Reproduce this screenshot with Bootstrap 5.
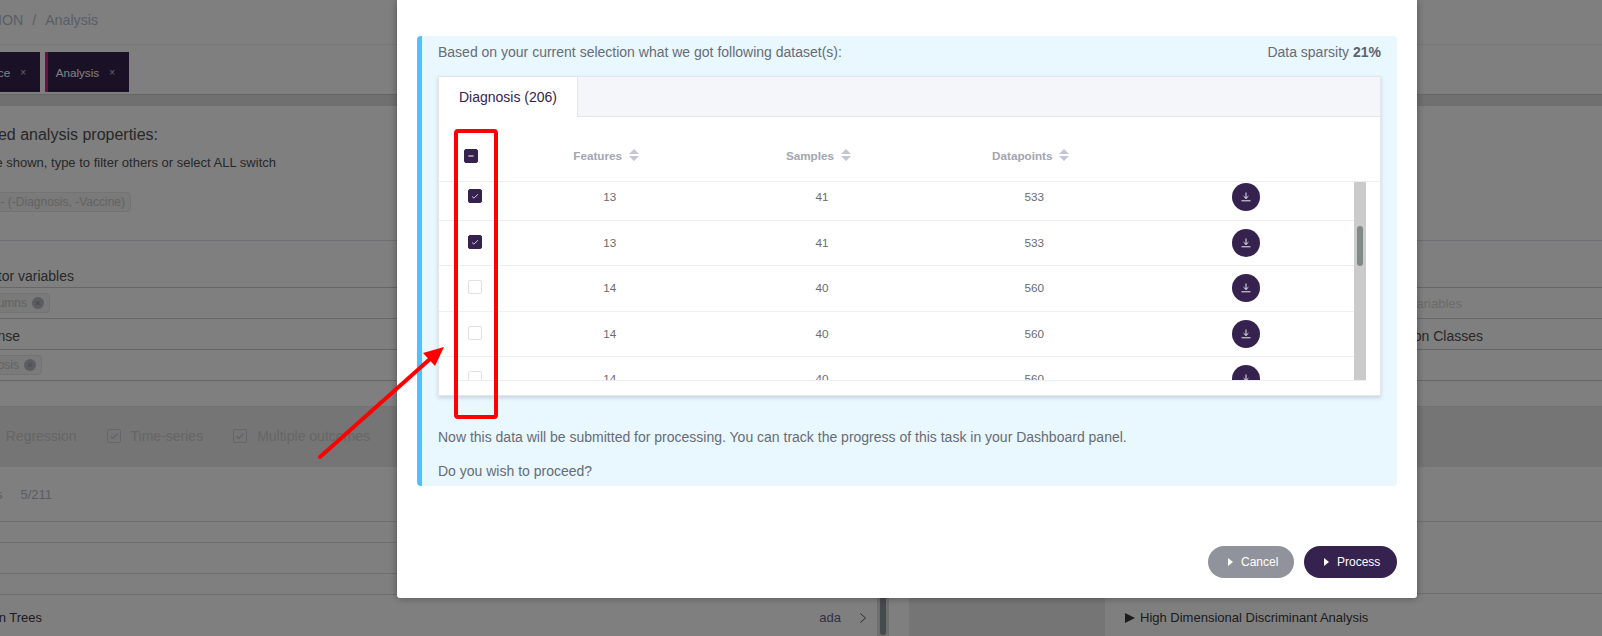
<!DOCTYPE html>
<html lang="en">
<head>
  <meta charset="UTF-8">
  <title>SIMON - Analysis</title>
  <link href="https://cdn.jsdelivr.net/npm/bootstrap@5.3.0/dist/css/bootstrap.min.css" rel="stylesheet">
  <style>
    html, body { height: 636px; overflow: hidden; }
    body { font-family: "Liberation Sans", Arial, sans-serif; font-size: 14px; color: #505050; background: #fff; }

    /* page behind the modal */
    .edge { display: flex; justify-content: flex-end; white-space: nowrap; flex: none; }
    .crumb-row { height: 45px; padding-bottom: 3px; border-bottom: 1px solid #eee; align-items: center; color: #b0bccb; }
    .crumb-row .edge { width: 98px; gap: 9px; font-size: 14.2px; }
    .tabs-row { height: 50px; padding-top: 7px; border-bottom: 1px solid #ccc; gap: 5px; }
    .app-tab { height: 40px; padding-top: 1px; background: #35224f; color: #fff; font-size: 11.7px; display: flex; align-items: center; justify-content: flex-end; white-space: nowrap; gap: 10px; padding-right: 14px; }
    .app-tab em { font-style: normal; font-size: 10px; color: #ccc; }
    .app-tab.first { width: 40px; flex: none; }
    .app-tab.last { width: 84px; flex: none; border-left: 3px solid #ee1489; padding-left: 7px; padding-right: 14px; }
    .gap-band { height: 11px; background: #e0e0e0; }
    .props-head { height: 135px; border-bottom: 1px solid #dcdce8; }
    .props-head .ttl { width: 158px; font-size: 16px; padding-top: 19px; line-height: 20px; }
    .props-head .sub { width: 276px; font-size: 13px; line-height: 20px; margin-top: 8px; }
    .props-head .chipwrap { width: 131px; margin-top: 19px; }
    .ghost-chip { height: 20px; border: 1px solid #e6e6e6; border-radius: 4px; color: #c6c6c6; font-size: 12px; display: flex; align-items: center; padding: 0 5px; background: #f4f4f4; gap: 5px; }
    .ghost-chip i { width: 12px; height: 12px; border-radius: 50%; background: #b6bac2; display: block; font-style: normal; font-size: 9px; line-height: 12px; text-align: center; color: #8a8e96; }
    .prop-row { display: flex; align-items: center; border-bottom: 1px solid #ccc; }
    .h-a { height: 47px; padding-top: 25px; }
    .h-b { height: 31px; }
    .h-c { height: 31px; padding-top: 5px; }
    .h-d { height: 31px; }
    .h-e { height: 25px; }
    .end-74 { width: 74px; }
    .end-50 { width: 50px; }
    .end-20 { width: 20px; }
    .end-42 { width: 42px; }
    .rt-faint { margin-left: auto; margin-right: 140px; margin-top: 2px; color: #d6d6d6; font-size: 13px; white-space: nowrap; }
    .rt-dark { margin-left: auto; margin-right: 119px; white-space: nowrap; }
    .opt-band { height: 61px; padding-bottom: 2px; background: #eaeaea; border-top: 1px solid #e2e2e2; align-items: center; }
    .opt-band .edge { width: 370px; align-items: center; color: #cccccc; }
    .opt-check { width: 14px; height: 14px; margin: 0 10px 0 30px; border: 1px solid #c8ccd4; border-radius: 2px; flex: none; display: flex; }
    .lower { height: 170px; }
    .lower-left { width: 889px; flex: none; }
    .lower-gap { width: 20px; flex: none; }
    .lower-mid { width: 196px; flex: none; background: #eaeaea; }
    .lr { border-bottom: 1px solid #ddd; display: flex; align-items: center; }
    .lr-a { height: 55px; padding-top: 2px; }
    .lr-b { height: 21px; }
    .lr-c { height: 31px; }
    .lr-d { height: 21px; }
    .lr-last { height: 42px; padding-top: 3px; display: flex; align-items: center; font-size: 13px; color: #3a3a3a; }
    .lr-a .edge { width: 52px; gap: 18px; font-size: 13px; color: #b4bac6; }
    .ada { margin-left: auto; color: #665f90; margin-right: 19px; }
    .chev { margin-right: 11px; }
    .side-track { width: 12px; flex: none; background: #dcdcdc; padding: 0 3px 2px; }
    .side-thumb { height: 100%; background: #8b9494; border-radius: 3px; }
    .r-a { height: 55px; border-bottom: 1px solid #ddd; }
    .r-b { height: 72px; border-bottom: 1px solid #ddd; }
    .r-last { height: 43px; padding: 5px 0 0 20px; display: flex; align-items: center; gap: 5px; font-size: 13px; color: #3a3a3a; white-space: nowrap; }
    .tri { width: 0; height: 0; border-left: 10px solid #383838; border-top: 5.5px solid transparent; border-bottom: 5.5px solid transparent; }

    /* modal */
    .modal.d-block { overflow: hidden; }
    .modal-dialog.dlg { max-width: 1020px; width: 1020px; margin: 0 0 0 397px; }
    .dlg .modal-content { height: 598px; border: 0; border-radius: 0 0 3px 3px; box-shadow: 0 0 8px rgba(0, 0, 0, .35); padding: 36px 20px 20px 20px; color: #676c75; }
    .info-box { height: 450px; margin: 0; padding: 6px 16px 0 16px; border: 0; border-left: 5px solid #4fc1ff; border-radius: 4px; background: #e9f7ff; color: #676c75; }
    .info-top { line-height: 20px; margin-bottom: 14px; }
    .info-top strong { color: #5c626c; }
    .note-a { margin: 31px 0 0; }
    .note-b { margin: 13px 0 0; }
    .set-card { height: 320px; border: 1px solid #e3e6ee; border-radius: 0; box-shadow: 0 2px 4px rgba(60, 70, 90, .2); background: #fff; }
    .set-card .nav-tabs { height: 40px; background: #f4f6fa; border-bottom: 1px solid #e3e6ee; }
    .set-card .nav-tabs .nav-link.active { height: 40px; width: 139px; padding: 0; display: flex; align-items: center; justify-content: center; color: #35224f; background: #fff; border: 0; border-right: 1px solid #e3e6ee; border-radius: 0; margin: 0; }
    .head-row { height: 65px; padding-top: 13px; border-bottom: 1px solid #eceef5; font-size: 11.7px; font-weight: 700; color: #a3a5b1; }
    .cell-first { width: 61px; padding-left: 25px; flex: none; }
    .cell-mid { width: 212.3px; flex: none; }
    .sort-ic { margin-left: 7px; flex: none; }
    .pane { height: 198px; padding-right: 14px; }
    .pane-rows { flex: 1 1 auto; overflow: hidden; }
    .pane-inner { margin-top: -7px; }
    .data-row { height: 45.5px; border-bottom: 1px solid #eceef5; font-size: 11.7px; color: #6b6b6f; }
    .data-row .cell-first { width: 64.5px; padding-left: 29px; }
    .data-row .tick { margin-bottom: 2px; }
    .track { width: 12px; flex: none; background: #cbcbcb; padding: 44px 3px 0; }
    .thumb { height: 40px; background: #808888; border-radius: 3px; }
    .tbl-foot { height: 15px; margin: 0 14px 0 19px; border-top: 1px solid #eceef5; }
    .form-check-input.tick { width: 14px; height: 14px; margin-top: 0; border-radius: 2px; border-color: #dfe1e7; }
    .form-check-input.tick:checked { background-color: #35224f; border-color: #35224f; background-image: url("data:image/svg+xml,%3csvg xmlns='http://www.w3.org/2000/svg' viewBox='0 0 14 14'%3e%3cpath fill='none' stroke='%23fff' stroke-width='.9' d='M3.5 7.5l2.2 2 4.8-4.5'/%3e%3c/svg%3e"); }
    .form-check-input.tick:indeterminate { background-color: #35224f; border-color: #35224f; background-image: url("data:image/svg+xml,%3csvg xmlns='http://www.w3.org/2000/svg' viewBox='0 0 14 14'%3e%3cpath fill='none' stroke='%23fff' stroke-width='1.3' d='M4 7h6'/%3e%3c/svg%3e"); }
    .dl-btn { width: 28px; height: 28px; padding: 0; margin-left: -2px; border: 0; border-radius: 50%; background: #35224f; display: flex; align-items: center; justify-content: center; }
    .act-btn { height: 32px; border: 0; font-size: 12px; color: #fff; display: flex; align-items: center; gap: 8px; padding: 0 14px 0 20px; }
    .act-btn::before { content: ""; border-left: 5px solid #fff; border-top: 4px solid transparent; border-bottom: 4px solid transparent; }
    .act-cancel { width: 86px; background: #90939b; }
    .act-go { width: 93px; background: #35224f; }
    .act-btn:hover { color: #fff; }
    .act-cancel:hover { background: #90939b; }
    .act-go:hover { background: #35224f; }
    .act-row { margin-top: 60px; gap: 10px; }
    .marks { position: absolute; top: 0; left: 0; z-index: 1060; pointer-events: none; }
  </style>
</head>
<body>
  <div id="pagina">
    <div class="crumb-row d-flex">
      <div class="edge"><span>SIMON</span><span>/</span><span>Analysis</span></div>
    </div>
    <div class="tabs-row d-flex">
      <div class="app-tab first"><span>Performance</span><em>&times;</em></div>
      <div class="app-tab last"><span>Analysis</span><em>&times;</em></div>
    </div>
    <div class="gap-band"></div>

    <div class="props-head">
      <div class="edge ttl">Selected analysis properties:</div>
      <div class="edge sub">Only first few are shown, type to filter others or select ALL switch</div>
      <div class="edge chipwrap"><span class="ghost-chip">Study - (-Diagnosis, -Vaccine)</span></div>
    </div>
    <div class="prop-row h-a"><div class="edge end-74">Predictor variables</div></div>
    <div class="prop-row h-b">
      <div class="edge end-50"><span class="ghost-chip">All columns <i>&times;</i></span></div>
      <div class="rt-faint">Predictor variables</div>
    </div>
    <div class="prop-row h-c">
      <div class="edge end-20">Response</div>
      <div class="rt-dark">Classification Classes</div>
    </div>
    <div class="prop-row h-d"><div class="edge end-42"><span class="ghost-chip">Diagnosis <i>&times;</i></span></div></div>
    <div class="h-e"></div>

    <div class="opt-band d-flex">
      <div class="edge">
        <span>Regression</span>
        <span class="opt-check"><svg width="12" height="12" viewBox="0 0 12 12"><path d="M2.5 6.2l2.4 2.3 4.6-5" fill="none" stroke="#c2c6ce" stroke-width="1.2"/></svg></span>
        <span>Time-series</span>
        <span class="opt-check"><svg width="12" height="12" viewBox="0 0 12 12"><path d="M2.5 6.2l2.4 2.3 4.6-5" fill="none" stroke="#c2c6ce" stroke-width="1.2"/></svg></span>
        <span>Multiple outcomes</span>
      </div>
    </div>

    <div class="lower d-flex">
      <div class="lower-left d-flex">
        <div class="flex-grow-1">
          <div class="lr lr-a"><div class="edge"><span>Models</span><span>5/211</span></div></div>
          <div class="lr lr-b"></div>
          <div class="lr lr-c"></div>
          <div class="lr lr-d"></div>
          <div class="lr-last">
            <div class="edge end-42">Boosted Classification Trees</div>
            <span class="ada">ada</span>
            <svg class="chev" width="6" height="10" viewBox="0 0 6 10"><path d="M.5.5L5.5 5 .5 9.5" fill="none" stroke="#555"/></svg>
          </div>
        </div>
        <div class="side-track"><div class="side-thumb"></div></div>
      </div>
      <div class="lower-gap"></div>
      <div class="lower-mid"></div>
      <div class="flex-grow-1">
        <div class="r-a"></div>
        <div class="r-b"></div>
        <div class="r-last"><span class="tri"></span><span>High Dimensional Discriminant Analysis</span></div>
      </div>
    </div>
  </div>

  <div class="modal-backdrop fade show"></div>

  <div class="modal d-block" tabindex="-1">
    <div class="modal-dialog dlg">
      <div class="modal-content">
        <div class="alert info-box">
          <div class="info-top d-flex justify-content-between">
            <span>Based on your current selection what we got following dataset(s):</span>
            <span>Data sparsity <strong>21%</strong></span>
          </div>

          <div class="card set-card">
            <ul class="nav nav-tabs">
              <li class="nav-item"><a class="nav-link active" href="#">Diagnosis (206)</a></li>
            </ul>
            <div class="head-row d-flex align-items-center">
              <div class="cell-first d-flex"><input class="form-check-input tick" type="checkbox" id="check-all"></div>
              <div class="cell-mid d-flex justify-content-center align-items-center">Features
                <svg class="sort-ic" width="10" height="12" viewBox="0 0 10 12"><path d="M5 0l5 5H0zM0 7h10l-5 5z" fill="#c3c6d4"/></svg></div>
              <div class="cell-mid d-flex justify-content-center align-items-center">Samples
                <svg class="sort-ic" width="10" height="12" viewBox="0 0 10 12"><path d="M5 0l5 5H0zM0 7h10l-5 5z" fill="#c3c6d4"/></svg></div>
              <div class="cell-mid d-flex justify-content-center align-items-center">Datapoints
                <svg class="sort-ic" width="10" height="12" viewBox="0 0 10 12"><path d="M5 0l5 5H0zM0 7h10l-5 5z" fill="#c3c6d4"/></svg></div>
            </div>
            <div class="pane d-flex">
              <div class="pane-rows"><div class="pane-inner" id="filas"></div></div>
              <div class="track"><div class="thumb"></div></div>
            </div>
            <div class="tbl-foot"></div>
          </div>

          <p class="note-a">Now this data will be submitted for processing. You can track the progress of this task in your Dashboard panel.</p>
          <p class="note-b">Do you wish to proceed?</p>
        </div>

        <div class="act-row d-flex justify-content-end">
          <button type="button" class="btn rounded-pill act-btn act-cancel">Cancel</button>
          <button type="button" class="btn rounded-pill act-btn act-go">Process</button>
        </div>
      </div>
    </div>
  </div>

  <svg class="marks" width="1602" height="636" viewBox="0 0 1602 636">
    <rect x="456" y="131" width="40" height="286" rx="2" fill="none" stroke="#ff0000" stroke-width="4"/>
    <path d="M320 457L430 359" stroke="#ff0000" stroke-width="4" stroke-linecap="round"/>
    <path d="M444 347L423 353 435 366z" fill="#ff0000"/>
  </svg>

  <script src="https://cdn.jsdelivr.net/npm/bootstrap@5.3.0/dist/js/bootstrap.bundle.min.js"></script>
  <script>
    const filas = [
      { features: 13, samples: 41, datapoints: 533, marcada: true },
      { features: 13, samples: 41, datapoints: 533, marcada: true },
      { features: 14, samples: 40, datapoints: 560, marcada: false },
      { features: 14, samples: 40, datapoints: 560, marcada: false },
      { features: 14, samples: 40, datapoints: 560, marcada: false }
    ];

    const cont = document.getElementById("filas");
    filas.forEach(f => {
      const row = document.createElement("div");
      row.className = "data-row d-flex align-items-center";
      row.innerHTML = `
        <div class="cell-first d-flex"><input class="form-check-input tick" type="checkbox" ${f.marcada ? "checked" : ""}></div>
        <div class="cell-mid text-center">${f.features}</div>
        <div class="cell-mid text-center">${f.samples}</div>
        <div class="cell-mid text-center">${f.datapoints}</div>
        <div class="cell-mid d-flex justify-content-center">
          <button type="button" class="btn dl-btn" aria-label="Download">
            <svg width="10" height="10" viewBox="0 0 10 10"><path d="M5 .5v6M2.6 4.2L5 6.5l2.4-2.3M.5 8.8h9" fill="none" stroke="#fff" stroke-width=".9"/></svg>
          </button>
        </div>
      `;
      cont.appendChild(row);
    });

    document.getElementById("check-all").indeterminate = true;
  </script>
</body>
</html>
